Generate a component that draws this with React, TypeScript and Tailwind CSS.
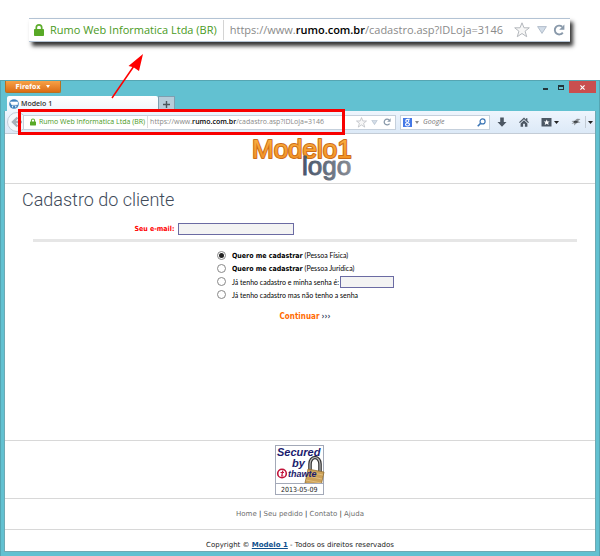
import { ReactNode } from "react";

const ui = "font-['Open_Sans','Noto_Sans',sans-serif]";
const verdana = "font-['DejaVu_Sans','Liberation_Sans',sans-serif]";

function Lock({ className }: { className: string }) {
  return (
    <svg viewBox="0 0 10 12" className={className} aria-hidden="true">
      <path d="M2.3 6V3.6a2.7 2.7 0 0 1 5.4 0V6" fill="none" stroke="#5fae2e" strokeWidth="1.7" />
      <rect x="0" y="5" width="10" height="7" rx="0.8" fill="#58a927" />
    </svg>
  );
}

function Star({ className }: { className: string }) {
  return (
    <svg viewBox="0 0 16 16" className={className} aria-hidden="true">
      <path
        d="M8 .8l2 5h5.3l-4.2 3.4 1.6 5.5L8 11.5l-4.700 3.200 1.600-5.500L.7 5.800H6z"
        fill="#f7f7f7"
        stroke="#b4b8bd"
        strokeWidth="1"
        strokeLinejoin="round"
      />
    </svg>
  );
}

function Triangle({ className }: { className: string }) {
  return (
    <svg viewBox="0 0 10 8" className={className} aria-hidden="true">
      <path d="M.6.6h8.800L5 7.400z" fill="#d3dde8" stroke="#a6b3c2" strokeWidth="0.8" />
    </svg>
  );
}

function Reload({ className }: { className: string }) {
  return (
    <svg viewBox="0 0 12 12" className={className} aria-hidden="true">
      <path d="M9.800 8.600A4.400 4.400 0 1 1 9.200 2.800" fill="none" stroke="#8999aa" strokeWidth="1.900" />
      <path d="M11.400.4v5.400H6.200z" fill="#8999aa" />
    </svg>
  );
}

function Address({ large }: { large?: boolean }) {
  return (
    <>
      <Lock className={large ? "h-3 w-[10px] shrink-0" : "h-2 w-[6px] shrink-0"} />
      <span className={large ? "ml-[6px] text-[#4a9a1c]" : "ml-[3px] text-[#4a9a1c]"}>Rumo Web Informatica Ltda (BR)</span>
      <span className={large ? "mx-[6px] h-5 w-px bg-[#d4d4d4]" : "mx-[2px] h-3 w-px bg-[#dcdcdc]"} />
      <span className="text-[#8a8a8a]">
        https://www.<span className="font-semibold text-black">rumo.com.br</span>
        /cadastro.asp?IDLoja=3146
      </span>
    </>
  );
}

function Callout() {
  return (
    <div
      className={`${ui} ml-[29px] mr-[30px] flex h-6 items-center whitespace-nowrap border-y border-[#b3c3d4] bg-white pl-[5px] pr-[5px] text-[11px] leading-4 shadow-[3px_4px_4px_#333]`}
    >
      <Address large />
      <div className="ml-auto flex items-center">
        <Star className="size-4" />
        <Triangle className="ml-[7px] h-2 w-[10px]" />
        <Reload className="ml-[6px] size-3" />
      </div>
    </div>
  );
}

function TitleBar() {
  return (
    <div className="flex h-[15px] items-start justify-between">
      <button
        type="button"
        className="ml-px flex h-3 w-14 items-center justify-center gap-[6px] rounded-b-[2px] border border-t-0 border-[#b9701f] bg-linear-to-b from-[#f7a146] to-[#dc6d12] font-['DejaVu_Sans_Condensed','DejaVu_Sans',sans-serif] text-[7px] leading-3 font-bold text-white"
      >
        Firefox
        <svg viewBox="0 0 4 3" className="h-[3px] w-1" aria-hidden="true">
          <path d="M0 0h4L2 3z" fill="#fff" />
        </svg>
      </button>
      <div className="flex items-start">
        <button type="button" aria-label="Minimizar" className="flex h-3 w-4 items-end justify-center pb-[3px]">
          <span className="h-[2px] w-[5px] bg-[#23363b]" />
        </button>
        <button type="button" aria-label="Maximizar" className="flex h-3 w-4 items-center justify-center">
          <span className="h-[5px] w-[6px] border border-t-2 border-[#23363b]" />
        </button>
        <button type="button" aria-label="Fechar" className="flex h-3 w-[27px] items-center justify-center bg-[#c94f4f]">
          <svg viewBox="0 0 6 6" className="size-[5px]" aria-hidden="true">
            <path d="M.5.5l5 5m0-5l-5 5" stroke="#fff" strokeWidth="1.400" />
          </svg>
        </button>
      </div>
    </div>
  );
}

function Tabs() {
  return (
    <div className={`${ui} flex h-[15px] items-end pl-[3px]`}>
      <div className="flex h-[15px] w-[151px] items-center gap-[2px] rounded-t-[2px] bg-linear-to-b from-white to-[#eef5fc] pl-[2px] text-[7px] leading-3 font-semibold text-[#333]">
        <svg viewBox="0 0 10 10" className="size-[10px]" aria-hidden="true">
          <circle cx="5" cy="5" r="4.800" fill="#3f82bd" />
          <path d="M1.500 3h7v2.500h-6zM3 6h4.500" fill="#fff" stroke="#fff" strokeWidth=".7" />
          <circle cx="3.500" cy="7.700" r=".7" fill="#fff" />
          <circle cx="6.800" cy="7.700" r=".7" fill="#fff" />
        </svg>
        Modelo 1
      </div>
      <button
        type="button"
        aria-label="Nova aba"
        className="flex h-[15px] w-[17px] items-center justify-center border border-b-0 border-[#7d9fb0] bg-[#b6cdda]"
      >
        <svg viewBox="0 0 7 7" className="size-[7px]" aria-hidden="true">
          <path d="M3.500 0v7M0 3.500h7" stroke="#4b565c" strokeWidth="1.400" />
        </svg>
      </button>
    </div>
  );
}

function Toolbar() {
  return (
    <div
      className={`${ui} flex h-[23px] items-center whitespace-nowrap border-b border-[#c3ccd6] bg-linear-to-b from-[#eef5fd] to-[#dce9f7] pl-[2px] text-[7px] leading-3`}
    >
      <button
        type="button"
        aria-label="Voltar"
        className="flex size-5 shrink-0 items-center justify-center rounded-full border border-[#c2ccd8] bg-[#f3f7fb]"
      >
        <svg viewBox="0 0 12 12" className="size-3" aria-hidden="true">
          <path d="M6.500 1.500L2 6l4.500 4.500M2 6h9" fill="none" stroke="#a6afb9" strokeWidth="2.400" />
        </svg>
      </button>
      <div className="relative -ml-1 flex h-[15px] flex-1 items-center border border-[#c5d0dc] bg-white pl-[6px] pr-1">
        <Address />
        <div className="ml-auto flex items-center">
          <Star className="size-[11px]" />
          <Triangle className="ml-1 h-[5px] w-[7px]" />
          <Reload className="ml-[5px] size-2" />
        </div>
        <div className="pointer-events-none absolute -top-[7px] right-[50px] -left-[6px] h-[26px] border-[3px] border-[#f80000]" />
      </div>
      <div className="ml-1 flex h-[15px] w-[90px] items-center border border-[#c5d0dc] bg-white px-[2px]">
        <svg viewBox="0 0 9 9" className="size-[9px] shrink-0" aria-hidden="true">
          <rect width="9" height="9" fill="#4478e6" />
          <circle cx="4.300" cy="2.900" r="1.500" fill="none" stroke="#fff" strokeWidth="1.100" />
          <ellipse cx="4.500" cy="6.500" rx="2" ry="1.500" fill="none" stroke="#fff" strokeWidth="1.100" />
          <path d="M4.500 1.200h2.500" stroke="#fff" strokeWidth=".9" />
        </svg>
        <svg viewBox="0 0 4 3" className="ml-[3px] h-[3px] w-1 shrink-0" aria-hidden="true">
          <path d="M0 0h4L2 3z" fill="#8c8c8c" />
        </svg>
        <input
          aria-label="Pesquisar no Google"
          placeholder="Google"
          className="ml-1 w-full min-w-0 bg-transparent italic placeholder:text-[#777]"
        />
        <svg viewBox="0 0 10 10" className="mr-[1px] size-[9px] shrink-0" aria-hidden="true">
          <circle cx="6.200" cy="3.800" r="2.800" fill="none" stroke="#3a74b4" strokeWidth="1.300" />
          <path d="M4 6L.8 9.200" stroke="#3a74b4" strokeWidth="1.700" />
        </svg>
      </div>
      <div className="ml-[7px] flex items-center pr-[2px]">
        <svg viewBox="0 0 10 10" className="size-[10px]" aria-hidden="true">
          <path d="M3.200.5h3.600V5H9.500L5 9.700.5 5h2.700z" fill="#4c5763" />
        </svg>
        <svg viewBox="0 0 10 10" className="ml-3 size-[10px]" aria-hidden="true">
          <path d="M5 .4L0 5.200l.9.9L5 2.200l4.100 3.900.9-.9-1.600-1.500V1.200H7v1.200z" fill="#4c5763" />
          <path d="M5 3.200L1.600 6.400v3.400h2.500V6.800h1.800v3h2.500V6.400z" fill="#4c5763" />
        </svg>
        <svg viewBox="0 0 11 10" className="ml-3 h-[10px] w-[11px]" aria-hidden="true">
          <path d="M.5 1h10v8.500H.5z" fill="#4c5763" />
          <path d="M5.700 2.500l.9 1.900h2.100L7.100 5.800l.6 2.200-2-1.200L3.700 8l.6-2.200-1.600-1.400h2.100z" fill="#fff" />
        </svg>
        <svg viewBox="0 0 5 3" className="ml-[2px] h-[3px] w-[5px]" aria-hidden="true">
          <path d="M0 0h5L2.500 3z" fill="#222" />
        </svg>
        <svg viewBox="0 0 10 8" className="ml-3 h-2 w-[10px]" aria-hidden="true">
          <path d="M.5 3l3-.3L6 .8l3.500.2-2.500 2L9.500 4.500 6 5 3 7.600l.3-2.300L.5 6l1.800-1.800z" fill="#8b9095" />
          <path d="M3 3h3.500v1.800H3z" fill="#3e4347" />
        </svg>
        <span className="ml-1 h-3 w-px bg-[#c3ccd6]" />
        <svg viewBox="0 0 5 3" className="ml-[2px] h-[3px] w-[5px]" aria-hidden="true">
          <path d="M0 0h5L2.500 3z" fill="#222" />
        </svg>
      </div>
    </div>
  );
}

function Logo() {
  return (
    <svg viewBox="0 0 106 49" className="h-[49px] w-[106px]" role="img" aria-label="Modelo1 logo">
      <defs>
        <linearGradient id="orange" x1="0" y1="0" x2="0" y2="1">
          <stop offset="0" stopColor="#fbb445" />
          <stop offset="1" stopColor="#f08c1e" />
        </linearGradient>
        <linearGradient id="slate" x1="0" y1="0" x2="1" y2="0">
          <stop offset="0" stopColor="#46546a" />
          <stop offset="1" stopColor="#878b93" />
        </linearGradient>
      </defs>
      <g fontFamily="Liberation Sans, sans-serif" fontSize="26" strokeLinejoin="round">
        <text x="2" y="24" fill="url(#orange)" stroke="#cc6d1a" strokeWidth="2" style={{ paintOrder: "stroke" }}>
          Modelo1
        </text>
        <text x="52" y="41" fill="url(#slate)" stroke="url(#slate)" strokeWidth="1">
          logo
        </text>
      </g>
    </svg>
  );
}

const fieldStyle = "h-3 border border-[#6b6ba3] bg-[#f3f3f3] px-1 text-[7px] outline-none";

function Choice({ id, checked, children, extra }: { id: string; checked?: boolean; children: ReactNode; extra?: ReactNode }) {
  return (
    <div className="flex h-[13px] items-center">
      <input
        type="radio"
        id={id}
        name="tipo"
        defaultChecked={checked}
        className="mr-[6px] size-[9px] appearance-none rounded-full border border-[#888] bg-white bg-clip-content p-[1px] checked:bg-[#222]"
      />
      <label htmlFor={id} className="font-['Lato','Liberation_Sans',sans-serif]">
        {children}
      </label>
      {extra}
    </div>
  );
}

function Bold({ children }: { children: ReactNode }) {
  return <b className="font-['DejaVu_Sans_Condensed','DejaVu_Sans',sans-serif]">{children}</b>;
}

function RegisterForm() {
  return (
    <form className="mr-[18px] ml-7 text-[7px] leading-3 text-black" onSubmit={(e) => e.preventDefault()}>
      <div className="flex items-center">
        <label
          htmlFor="email"
          className="w-[26%] text-right font-['DejaVu_Sans_Condensed','DejaVu_Sans',sans-serif] font-bold text-[#f00]"
        >
          Seu e-mail:
        </label>
        <input id="email" type="email" className={`${fieldStyle} ml-1 w-[116px]`} />
      </div>
      <hr className="mt-1 h-[3px] border-0 bg-[#e6e6e6]" />
      <fieldset className="mx-auto mt-[7px] w-[178px] pl-px whitespace-nowrap">
        <Choice id="fisica" checked>
          <Bold>Quero me cadastrar</Bold> (Pessoa Física)
        </Choice>
        <Choice id="juridica">
          <Bold>Quero me cadastrar</Bold> (Pessoa Jurídica)
        </Choice>
        <Choice
          id="senha"
          extra={<input type="password" aria-label="Senha" className={`${fieldStyle} ml-auto w-[54px]`} />}
        >
          Já tenho cadastro e minha senha é:
        </Choice>
        <Choice id="sem-senha">Já tenho cadastro mas não tenho a senha</Choice>
      </fieldset>
      <button
        type="submit"
        className="mx-auto mt-[10px] flex items-center gap-[2px] font-['DejaVu_Sans_Condensed','DejaVu_Sans',sans-serif] text-[8px] leading-3 font-bold text-[#ff6a00]"
      >
        Continuar <span className="text-[#34435e]">›››</span>
      </button>
    </form>
  );
}

function Seal() {
  return (
    <svg viewBox="0 0 50 50" className="size-[50px]" role="img" aria-label="Secured by thawte">
      <rect x=".5" y=".5" width="48" height="49" fill="#fff" stroke="#a3a9b8" />
      <path d="M35 26v-7a5 6.500 0 0 1 10 0v9" fill="none" stroke="#333" strokeWidth="3.600" />
      <path d="M35 26v-7a5 6.500 0 0 1 10 0v9" fill="none" stroke="#bdbdbd" strokeWidth="1.200" />
      <path d="M33 24l16 3-3 14-16-3z" fill="#cda259" stroke="#8b6526" strokeWidth=".7" />
      <path d="M33 27l15 3M32 31l15 3M31 35l15 3" stroke="#e3c387" strokeWidth=".8" />
      <path d="M1 38.500h47" stroke="#a3a9b8" />
      <g fontFamily="Liberation Sans, sans-serif" fontWeight="bold" fontStyle="italic" fill="#1b1b6e">
        <text x="2" y="11" fontSize="11">Secured</text>
        <text x="17" y="22" fontSize="11">by</text>
        <text x="13" y="32" fontSize="9">thawte</text>
      </g>
      <circle cx="7" cy="28.500" r="4.300" fill="#fff" stroke="#c2143a" strokeWidth="1.600" />
      <path d="M7.800 25.500l-1 5.500h1.600M5.500 27.500h3.500" fill="none" stroke="#c2143a" strokeWidth="1.200" />
      <rect x="1" y="39" width="47" height="10" fill="#fff" />
      <text x="6" y="47" fontFamily="DejaVu Sans Condensed, sans-serif" fontSize="7" fill="#222">2013-05-09</text>
    </svg>
  );
}

const links = ["Home", "Seu pedido", "Contato", "Ajuda"];

export default function App() {
  return (
    <div className="relative bg-white pt-[18px]">
      <Callout />
      <div className="mt-[38px] border-x border-t border-[#55a5b2] bg-[#62c1d1] px-[3px] pb-1">
        <TitleBar />
        <Tabs />
        <div className="border-x border-b border-[#6fa9b3] bg-white">
          <Toolbar />
          <header className="flex justify-center border-b border-[#d8d8d8] pl-[6px]">
            <Logo />
          </header>
          <h1 className="pt-[2px] pl-[17px] font-['Roboto',sans-serif] text-[18px] leading-7 font-light text-[#414b5a]">
            Cadastro do cliente
          </h1>
          <div className="pt-[9px]">
            <RegisterForm />
          </div>
          <footer className={`${verdana} mt-[117px] text-center text-[7px] leading-3`}>
            <div className="flex justify-center border-y border-[#d8d8d8] pt-1 pb-[3px]">
              <Seal />
            </div>
            <nav className="border-b border-[#d8d8d8] py-[9px] text-[#222]">
              {links.map((l, i) => (
                <span key={l}>
                  {i > 0 && " | "}
                  <a href="#" className="text-[#6e6e6e]">
                    {l}
                  </a>
                </span>
              ))}
            </nav>
            <p className="pt-[9px] text-[#222]">
              Copyright ©{" "}
              <a href="#" className="font-bold text-[#10508e] underline">
                Modelo 1
              </a>{" "}
              - Todos os direitos reservados
            </p>
          </footer>
        </div>
      </div>
      <svg viewBox="0 0 40 50" className="pointer-events-none absolute top-[52px] left-[108px] h-[50px] w-10" aria-hidden="true">
        <path d="M4 46L28 11" stroke="#f00" strokeWidth="1.500" />
        <path d="M35 2L20.500 14l5 1.200L31 19z" fill="#f00" />
      </svg>
    </div>
  );
}
